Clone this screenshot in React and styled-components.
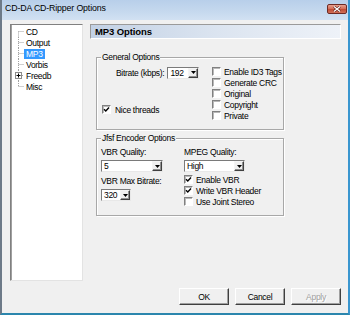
import React from 'react';
import styled, { createGlobalStyle } from 'styled-components';

const GlobalStyle = createGlobalStyle`
  html, body {
    margin: 0;
    padding: 0;
    background: #f0f0f0;
  }
  body {
    font-family: "Liberation Sans", Arial, sans-serif;
    color: #000;
  }
`;

const Window = styled.div`
  width: 350px;
  height: 315px;
  box-sizing: border-box;
  display: flex;
  flex-direction: column;
  border-left: 2px solid #6d7a88;
  border-right: 2px solid #3a96cf;
  border-bottom: 2px solid #2b86ad;
  overflow: hidden;
`;

const TitleBar = styled.div`
  height: 20px;
  flex: none;
  display: flex;
  align-items: flex-start;
  padding: 0 1px 0 3px;
  background: linear-gradient(180deg, #b8cfea 0%, #c6d9ee 60%, #d2e1f2 100%);
`;

const TitleText = styled.span`
  flex: 1;
  font-size: 8.8px;
  line-height: 17px;
  letter-spacing: -0.15px;
`;

const CloseButton = styled.div`
  margin-top: 4px;
  width: 20px;
  height: 10px;
  box-sizing: border-box;
  border: 1px solid #6e2a24;
  border-radius: 2px;
  background: linear-gradient(180deg, #e6a08f 0%, #d46a53 50%, #c04a33 51%, #d07058 100%);
  display: flex;
  align-items: center;
  justify-content: center;
`;

const Client = styled.div`
  flex: 1;
  display: flex;
  flex-direction: column;
  background: #f0f0f0;
  padding: 4px 7px 0 8px;
`;

const Main = styled.div`
  display: flex;
  gap: 7px;
  height: 257px;
`;

const Tree = styled.div`
  width: 73px;
  height: 257px;
  box-sizing: border-box;
  background: #fff;
  border: 1px solid;
  border-color: #808080 #e3e3e3 #e3e3e3 #808080;
  box-shadow: inset 1px 0 0 #a0a0a0;
  padding-top: 1px;
`;

const TreeRow = styled.div`
  display: flex;
  align-items: center;
  height: 11px;
`;

const TreeLabel = styled.span`
  font-size: 8.5px;
  letter-spacing: -0.3px;
  line-height: 10px;
  padding: 0 2px;
  background: ${(p) => (p.$selected ? '#3399ff' : 'transparent')};
  color: ${(p) => (p.$selected ? '#fff' : '#000')};
`;

const Panel = styled.div`
  width: 251px;
  display: flex;
  flex-direction: column;
`;

const Header = styled.div`
  height: 15px;
  box-sizing: border-box;
  border-top: 1px solid #9a9a9a;
  border-left: 1px solid #9a9a9a;
  border-bottom: 1px solid #fff;
  border-right: 1px solid #fff;
  background: linear-gradient(90deg, #c2d1e5 0%, #dbe4f0 50%, #eef2f8 100%);
  font-size: 9.5px;
  font-weight: bold;
  letter-spacing: -0.1px;
  line-height: 13px;
  padding-left: 4px;
`;

const GroupBox = styled.div`
  margin-top: ${(p) => p.$top}px;
  margin-left: 6px;
  width: 188px;
  height: ${(p) => p.$height}px;
  box-sizing: border-box;
  border: 1px solid #a8a8a8;
  box-shadow: inset 1px 1px 0 #fff, 1px 1px 0 #fff;
`;

const GroupTitle = styled.div`
  margin: -6px 0 0 4px;
  padding: 0 1px;
  width: fit-content;
  background: #f0f0f0;
  font-size: 8.5px;
  letter-spacing: -0.3px;
  line-height: 10px;
`;

const GroupBody = styled.div`
  display: flex;
  padding: 4px 0 0 ${(p) => p.$left}px;
`;

const Column = styled.div`
  display: flex;
  flex-direction: column;
  width: ${(p) => (p.$width ? `${p.$width}px` : 'auto')};
`;

const BitrateRow = styled.div`
  display: flex;
  align-items: center;
  height: 13px;
  padding-left: 14px;
  gap: 3px;
`;

const Text = styled.span`
  font-size: 8.5px;
  letter-spacing: -0.3px;
  line-height: 10px;
  white-space: nowrap;
`;

const FieldLabel = styled(Text)`
  display: block;
  height: 10px;
  margin-top: ${(p) => p.$top || 0}px;
`;

const CheckRow = styled.div`
  display: flex;
  align-items: center;
  gap: ${(p) => p.$gap ?? 3}px;
  height: 11px;
  margin-top: ${(p) => p.$top || 0}px;
`;

const Box = styled.span`
  width: 9px;
  height: 9px;
  flex: none;
  box-sizing: border-box;
  background: #fff;
  border: 1px solid;
  border-color: #808080 #fff #fff #808080;
  box-shadow: inset 1px 1px 0 #b8b8b8;
  display: flex;
  align-items: center;
  justify-content: center;
`;

const Combo = styled.div`
  display: flex;
  width: ${(p) => p.$width}px;
  height: 12px;
  margin-top: ${(p) => p.$top || 0}px;
  box-sizing: border-box;
  background: #fff;
  border: 1px solid;
  border-color: #7a7a7a #e8e8e8 #e8e8e8 #7a7a7a;
`;

const ComboValue = styled.span`
  flex: 1;
  font-size: 8.5px;
  letter-spacing: -0.3px;
  line-height: 10px;
  padding-left: 2px;
`;

const ComboButton = styled.span`
  width: 10px;
  height: 10px;
  box-sizing: border-box;
  background: #f0f0f0;
  border: 1px solid;
  border-color: #f4f4f4 #404040 #404040 #f4f4f4;
  box-shadow: inset -1px -1px 0 #909090;
  display: flex;
  align-items: center;
  justify-content: center;
`;

const Footer = styled.div`
  display: flex;
  justify-content: flex-end;
  gap: 6px;
  padding-top: 7px;
`;

const PushButton = styled.div`
  width: 50px;
  height: 17px;
  box-sizing: border-box;
  background: #f0f0f0;
  border: 1px solid;
  border-color: #fff #404040 #404040 #fff;
  box-shadow: inset -1px -1px 0 #a0a0a0;
  display: flex;
  align-items: center;
  justify-content: center;
  font-size: 8.5px;
  letter-spacing: -0.3px;
  color: ${(p) => (p.$disabled ? '#a0a0a0' : '#000')};
  text-shadow: ${(p) => (p.$disabled ? '1px 1px 0 #fff' : 'none')};
`;

const Connector = ({ first, last, plus }) => (
  <svg width="13" height="11" style={{ flex: 'none' }}>
    <line
      x1="7.5"
      y1={first ? 5.5 : 0}
      x2="7.5"
      y2={last ? 5.5 : 11}
      stroke="#a0a0a0"
      strokeDasharray="1 1"
    />
    <line x1={plus ? 11 : 7.5} y1="5.5" x2="13" y2="5.5" stroke="#a0a0a0" strokeDasharray="1 1" />
    {plus && (
      <g>
        <rect x="4.5" y="2.5" width="6" height="6" fill="#fff" stroke="#8c8c8c" />
        <line x1="5.5" y1="5.5" x2="9.5" y2="5.5" stroke="#000" />
        <line x1="7.5" y1="3.5" x2="7.5" y2="7.5" stroke="#000" />
      </g>
    )}
  </svg>
);

const Arrow = () => (
  <svg width="5" height="3" viewBox="0 0 5 3">
    <path d="M0 0 H5 L2.5 3 Z" fill="#000" />
  </svg>
);

const Tick = () => (
  <svg width="7" height="7" viewBox="0 0 7 7">
    <path d="M1 3.2 L2.8 5 L6 1.6" fill="none" stroke="#000" strokeWidth="1.4" />
  </svg>
);

const Check = ({ checked, label, gap, top }) => (
  <CheckRow $gap={gap} $top={top}>
    <Box>{checked && <Tick />}</Box>
    <Text>{label}</Text>
  </CheckRow>
);

const Select = ({ value, width, top }) => (
  <Combo $width={width} $top={top}>
    <ComboValue>{value}</ComboValue>
    <ComboButton>
      <Arrow />
    </ComboButton>
  </Combo>
);

const treeItems = [
  { label: 'CD' },
  { label: 'Output' },
  { label: 'MP3', selected: true },
  { label: 'Vorbis' },
  { label: 'Freedb', plus: true },
  { label: 'Misc' },
];

const App = () => (
  <>
    <GlobalStyle />
    <Window>
      <TitleBar>
        <TitleText>CD-DA CD-Ripper Options</TitleText>
        <CloseButton>
          <svg width="8" height="6" viewBox="0 0 8 6">
            <path d="M1 0.5 L7 5.5 M7 0.5 L1 5.5" stroke="#5a1a12" strokeWidth="2.4" />
            <path d="M1 0.5 L7 5.5 M7 0.5 L1 5.5" stroke="#fff" strokeWidth="1.3" />
          </svg>
        </CloseButton>
      </TitleBar>
      <Client>
        <Main>
          <Tree>
            {treeItems.map((item, i) => (
              <TreeRow key={item.label}>
                <Connector first={i === 0} last={i === treeItems.length - 1} plus={item.plus} />
                <TreeLabel $selected={item.selected}>{item.label}</TreeLabel>
              </TreeRow>
            ))}
          </Tree>
          <Panel>
            <Header>MP3 Options</Header>
            <GroupBox $top={18} $height={73}>
              <GroupTitle>General Options</GroupTitle>
              <GroupBody $left={5}>
                <Column $width={110}>
                  <BitrateRow>
                    <Text>Bitrate (kbps):</Text>
                    <Select value="192" width={32} />
                  </BitrateRow>
                  <Check checked label="Nice threads" gap={4} top={25} />
                </Column>
                <Column>
                  <Check label="Enable ID3 Tags" />
                  <Check label="Generate CRC" />
                  <Check label="Original" />
                  <Check label="Copyright" />
                  <Check label="Private" />
                </Column>
              </GroupBody>
            </GroupBox>
            <GroupBox $top={8} $height={78}>
              <GroupTitle>Jfsf Encoder Options</GroupTitle>
              <GroupBody $left={4}>
                <Column $width={83}>
                  <FieldLabel>VBR Quality:</FieldLabel>
                  <Select value="5" width={62} top={3} />
                  <FieldLabel $top={4}>VBR Max Bitrate:</FieldLabel>
                  <Select value="320" width={30} top={3} />
                </Column>
                <Column>
                  <FieldLabel>MPEG Quality:</FieldLabel>
                  <Select value="High" width={61} top={3} />
                  <Check checked label="Enable VBR" top={2} />
                  <Check checked label="Write VBR Header" />
                  <Check label="Use Joint Stereo" />
                </Column>
              </GroupBody>
            </GroupBox>
          </Panel>
        </Main>
        <Footer>
          <PushButton>OK</PushButton>
          <PushButton>Cancel</PushButton>
          <PushButton $disabled>Apply</PushButton>
        </Footer>
      </Client>
    </Window>
  </>
);

export default App;
